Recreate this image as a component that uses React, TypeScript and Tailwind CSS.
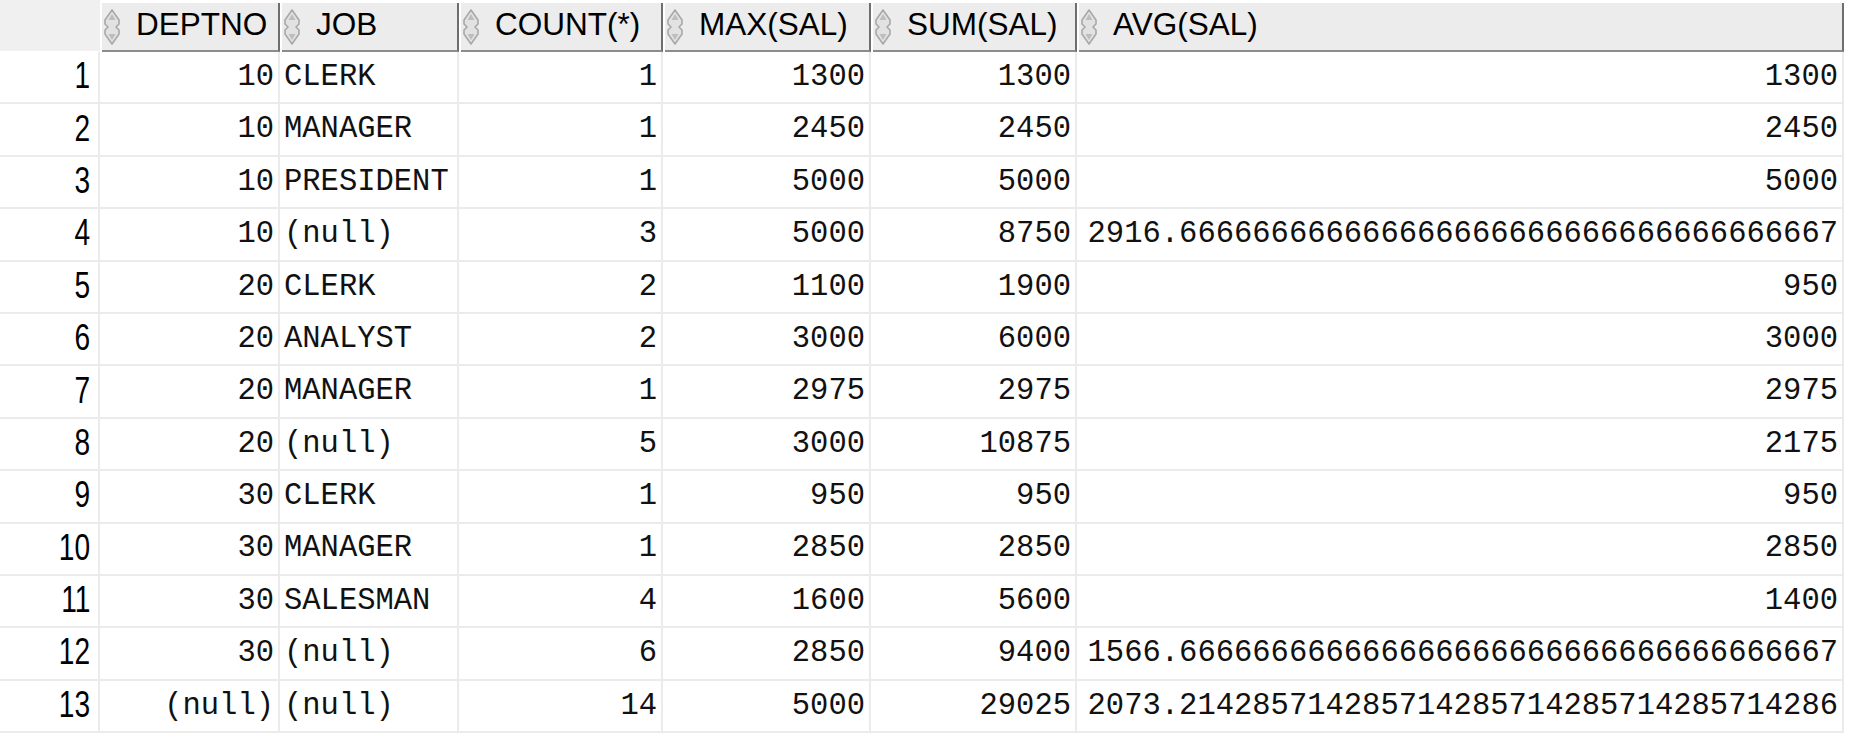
import React from "react";

const SortIcon = () => (
  <svg width="18" height="36" viewBox="0 0 18 36" className="shrink-0">
    <path
      d="M9 1 L16 11 L16 15 L13 18 L16 21 L16 25 L9 35 L2 25 L2 21 L5 18 L2 15 L2 11 Z"
      fill="#e2e2e2"
      stroke="#a8a8a8"
      strokeWidth="1.6"
      strokeLinejoin="round"
    />
    <path d="M9 5 L12.5 11 L5.5 11 Z" fill="#bdbdbd" />
    <path d="M9 31 L12.5 25 L5.5 25 Z" fill="#bdbdbd" />
  </svg>
);

const cols = [
  { name: "DEPTNO", w: "w-[180px]", align: "right" },
  { name: "JOB", w: "w-[179px]", align: "left" },
  { name: "COUNT(*)", w: "w-[204px]", align: "right" },
  { name: "MAX(SAL)", w: "w-[208px]", align: "right" },
  { name: "SUM(SAL)", w: "w-[206px]", align: "right" },
  { name: "AVG(SAL)", w: "w-[767px]", align: "right" },
];

const rows: string[][] = [
  ["10", "CLERK", "1", "1300", "1300", "1300"],
  ["10", "MANAGER", "1", "2450", "2450", "2450"],
  ["10", "PRESIDENT", "1", "5000", "5000", "5000"],
  ["10", "(null)", "3", "5000", "8750", "2916." + "6".repeat(35) + "7"],
  ["20", "CLERK", "2", "1100", "1900", "950"],
  ["20", "ANALYST", "2", "3000", "6000", "3000"],
  ["20", "MANAGER", "1", "2975", "2975", "2975"],
  ["20", "(null)", "5", "3000", "10875", "2175"],
  ["30", "CLERK", "1", "950", "950", "950"],
  ["30", "MANAGER", "1", "2850", "2850", "2850"],
  ["30", "SALESMAN", "4", "1600", "5600", "1400"],
  ["30", "(null)", "6", "2850", "9400", "1566." + "6".repeat(35) + "7"],
  ["(null)", "(null)", "14", "5000", "29025", "2073.214285714285714285714285714285714286"],
];

export default function App() {
  return (
    <div className="w-[1850px] h-[745px] bg-white overflow-hidden">
      {/* header */}
      <div className="flex h-[52px]">
        <div className="w-[100px] h-[51px] bg-[#f0f0f0]" />
        {cols.map((c) => (
          <div key={c.name} className={`${c.w} h-[52px] pt-[3px] pl-[2px] flex`}>
            <div className="flex-1 flex items-center bg-[#ececec] border-r-2 border-b-2 border-r-[#6e6e6e] border-b-[#8c8c8c] pl-[1px] gap-[15px] font-['Liberation_Sans',sans-serif] text-[31.5px] leading-none text-black">
              <SortIcon />
              <span className="pb-[3px]">{c.name}</span>
            </div>
          </div>
        ))}
      </div>
      {/* body */}
      <div className="flex flex-col">
        {rows.map((r, i) => (
          <div key={i} className="flex h-[52.4px]">
            <div className="w-[100px] border-r-2 border-b-2 border-[#ebebeb] flex items-center justify-end pr-[8px] font-['Liberation_Sans',sans-serif] text-[36px] leading-none text-black">
              <span className="inline-block scale-x-[0.78] origin-right pb-[2px]">{i + 1}</span>
            </div>
            {r.map((v, j) => (
              <div
                key={j}
                className={`${cols[j].w} border-r-2 border-b-2 border-[#ebebeb] flex items-center ${
                  cols[j].align === "right" ? "justify-end pr-[4px]" : "justify-start pl-[4px]"
                } font-['Liberation_Mono',monospace] text-[30.5px] leading-none text-[#111] whitespace-nowrap`}
              >
                {v}
              </div>
            ))}
          </div>
        ))}
      </div>
    </div>
  );
}
